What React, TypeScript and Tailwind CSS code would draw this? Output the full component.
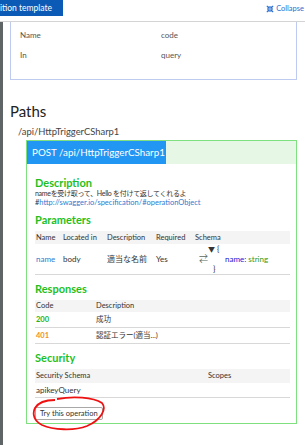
import React from 'react'

const font = { fontFamily: 'Lato, "Noto Sans CJK JP", sans-serif' }

function CollapseIcon() {
    return (
        <svg width="8" height="8" viewBox="0 0 10 10" className="text-[#2a6fcf] shrink-0">
            <g stroke="currentColor" strokeWidth="1.4" fill="none">
                <path d="M1 1l3 3M4 1.5V4H1.5" />
                <path d="M9 1L6 4M6 1.5V4h2.5" />
                <path d="M1 9l3-3M4 8.5V6H1.5" />
                <path d="M9 9L6 6M6 8.5V6h2.5" />
            </g>
        </svg>
    )
}

function SectionTitle({ children }: { children: React.ReactNode }) {
    return (
        <h4 className="text-[11px] leading-[13px] font-bold text-[#1fbf1f]">
            {children}
        </h4>
    )
}

export default function App() {
    return (
        <div
            className="relative w-[305px] h-[445px] overflow-hidden bg-white text-[#333]"
            style={font}
        >
            {/* Top bar */}
            <div className="flex justify-between items-start h-[22px] border-b border-[#d4d4d4]">
                <div className="h-[16px] w-[63px] bg-[#0b5ab6] text-white text-[8.5px] leading-[16px] whitespace-nowrap overflow-hidden">
                    ition template
                </div>
                <div className="flex items-center gap-[2px] pt-[4px] pr-[1px] text-[7.5px] leading-[9px] text-[#2a6fcf] whitespace-nowrap">
                    <CollapseIcon />
                    <span>Collapse</span>
                </div>
            </div>

            <div className="flex h-[423px]">
                <div className="w-[3px] bg-[#5f6566]" />
                <div className="pl-[7px] flex-1">
                    {/* Parameter box */}
                    <div className="w-[287px] h-[58px] border border-t-0 border-[#bfcaf0] pt-[3px] text-[8px] text-[#555]">
                        <div className="flex h-[20px] items-center">
                            <span className="w-[150px] pl-[9px]">Name</span>
                            <span>code</span>
                        </div>
                        <div className="flex h-[20px] items-center">
                            <span className="w-[150px] pl-[9px]">In</span>
                            <span>query</span>
                        </div>
                    </div>

                    <h2 className="mt-[21px] text-[15px] leading-[20px] text-[#222]">Paths</h2>
                    <div className="mt-[4px] pl-[8px] text-[9.4px] leading-[13px] text-[#444]">
                        /api/HttpTriggerCSharp1
                    </div>

                    {/* Operation */}
                    <div className="ml-[16px] mt-[2px] w-[271px] h-[284px] border border-[#7fe07f]">
                        <div className="flex h-[23px] bg-[#e6f7e6]">
                            <div className="w-[139px] bg-[#2196f3] text-white text-[9.8px] leading-[23px] pl-[5px] whitespace-nowrap">
                                POST /api/HttpTriggerCSharp1
                            </div>
                        </div>

                        <div className="pl-[8px] pr-[6px]">
                            <div className="mt-[12px]">
                                <SectionTitle>Description</SectionTitle>
                            </div>
                            <p className="-mt-[1px] text-[7px] leading-[10px] text-[#333] whitespace-nowrap tracking-[-0.3px]">
                                nameを受け取って、Hello を付けて返してくれるよ
                            </p>
                            <p className="text-[7.5px] leading-[10px] text-[#333] whitespace-nowrap">
                                #<a className="text-[#2d7bd0]">http://swagger.io/specification/#operationObject</a>
                            </p>

                            <div className="mt-[5px]">
                                <SectionTitle>Parameters</SectionTitle>
                            </div>
                            <div className="mt-[5px] text-[7.5px] text-[#333]">
                                <div className="flex h-[13px] items-center bg-[#f4f4f4]">
                                    <span className="w-[28px] pl-[1px]">Name</span>
                                    <span className="w-[44px]">Located in</span>
                                    <span className="w-[49px]">Description</span>
                                    <span className="w-[39px]">Required</span>
                                    <span>Schema</span>
                                </div>
                                <div className="flex h-[31px] items-center border-b border-[#d8d8d8] text-[8px]">
                                    <span className="w-[28px] pl-[1px] text-[#2d7bd0]">name</span>
                                    <span className="w-[44px]">body</span>
                                    <span className="w-[49px]">適当な名前</span>
                                    <span className="w-[43px]">Yes</span>
                                    <span className="w-[9px] text-[#5a6a5a] text-[9px] leading-[10px]">⇄</span>
                                    <div className="leading-[10px] text-[8px]">
                                        <div>
                                            <span className="text-[7px]">▼</span> {'{'}
                                        </div>
                                        <div className="pl-[17px] whitespace-nowrap">
                                            <span className="text-[#2020d0]">name: </span>
                                            <span className="text-[#2a9a2a]">string</span>
                                        </div>
                                        <div className="pl-[5px]">{'}'}</div>
                                    </div>
                                </div>
                            </div>

                            <div className="mt-[7px]">
                                <SectionTitle>Responses</SectionTitle>
                            </div>
                            <div className="mt-[5px] text-[7.5px]">
                                <div className="flex h-[12px] items-center bg-[#f4f4f4]">
                                    <span className="w-[61px] pl-[1px]">Code</span>
                                    <span>Description</span>
                                </div>
                                <div className="flex h-[16px] items-center border-b border-[#d8d8d8]">
                                    <span className="w-[61px] pl-[1px] font-bold text-[#22b422]">200</span>
                                    <span>成功</span>
                                </div>
                                <div className="flex h-[16px] items-center border-b border-[#d8d8d8]">
                                    <span className="w-[61px] pl-[1px] font-bold text-[#f0902a]">401</span>
                                    <span>認証エラー(適当...)</span>
                                </div>
                            </div>

                            <div className="mt-[7px]">
                                <SectionTitle>Security</SectionTitle>
                            </div>
                            <div className="mt-[5px] text-[7.5px]">
                                <div className="flex h-[14px] items-center bg-[#f4f4f4]">
                                    <span className="w-[173px] pl-[1px]">Security Schema</span>
                                    <span>Scopes</span>
                                </div>
                                <div className="flex h-[15px] items-center border-b border-[#d8d8d8] text-[8px]">
                                    <span className="pl-[1px]">apikeyQuery</span>
                                </div>
                            </div>
                            <button className="mt-[7px] h-[13px] px-[4px] border border-[#a8a8a8] rounded-[2px] bg-white text-[7.5px] leading-[11px] text-[#333]">
                                Try this operation
                            </button>
                        </div>
                    </div>
                </div>
            </div>

            {/* Red hand-drawn circle around the button */}
            <svg
                className="absolute left-[31px] top-[396px]"
                width="76"
                height="36"
                viewBox="0 0 76 36"
            >
                <path
                    d="M26 3 C42 0, 62 1, 71 7 C76 13, 70 24, 56 30 C43 35, 22 34, 11 29 C3 25, 1 18, 4 12 C7 7, 14 4, 24 4"
                    fill="none"
                    stroke="#e11"
                    strokeWidth="1.8"
                />
            </svg>
        </div>
    )
}
